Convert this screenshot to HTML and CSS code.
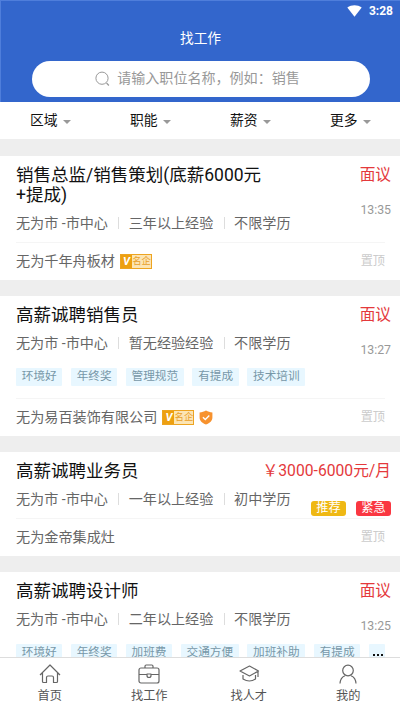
FILE: index.html
```html
<!DOCTYPE html>
<html lang="zh-CN">
<head>
<meta charset="utf-8">
<title>找工作</title>
<link rel="stylesheet" href="styles.css">
</head>
<body>
<div class="app">
  <header class="header">
    <div class="status">
      <svg class="wifi" viewBox="0 0 15 12"><path d="M.3 2.6C4.6-.6 10.4-.6 14.7 2.6L7.5 11.8z" fill="#fff"/></svg>
      <span>3:28</span>
    </div>
    <h1 class="page-title">找工作</h1>
    <div class="search">
      <svg class="search-icon" viewBox="0 0 15 16" fill="none" stroke="#999" stroke-width="1"><circle cx="7" cy="7.2" r="6.1"/><path d="M11.5 12l2.4 2.5" stroke-width="1.2"/></svg>
      <span>请输入职位名称，例如：销售</span>
    </div>
  </header>
  <nav class="filters">
    <div class="filter">区域<i class="caret"></i></div>
    <div class="filter">职能<i class="caret"></i></div>
    <div class="filter">薪资<i class="caret"></i></div>
    <div class="filter">更多<i class="caret"></i></div>
  </nav>
  <main class="list">
    <article class="card">
      <div class="top">
        <div class="info">
          <h2 class="title">销售总监/销售策划(底薪6000元<br>+提成)</h2>
          <div class="meta"><span>无为市 -市中心</span><span>三年以上经验</span><span>不限学历</span></div>
        </div>
        <div class="side"><div class="price">面议</div><div class="time">13:35</div></div>
      </div>
      <div class="company"><span>无为千年舟板材</span><span class="famous"><b>V</b><em>名企</em></span><span class="pin">置顶</span></div>
    </article>
    <article class="card">
      <div class="top">
        <div class="info">
          <h2 class="title">高薪诚聘销售员</h2>
          <div class="meta"><span>无为市 -市中心</span><span>暂无经验经验</span><span>不限学历</span></div>
        </div>
        <div class="side"><div class="price">面议</div><div class="time">13:27</div></div>
      </div>
      <div class="tags"><span>环境好</span><span>年终奖</span><span>管理规范</span><span>有提成</span><span>技术培训</span></div>
      <div class="company"><span>无为易百装饰有限公司</span><span class="famous"><b>V</b><em>名企</em></span>
        <svg class="shield" viewBox="0 0 14 15"><path d="M7 .5C9 1.7 11 2.2 13.4 2.4V7.5c0 3.3-2.5 5.500-6.400 7C3.100 13 .6 10.800 .6 7.500V2.400C3 2.200 5 1.700 7 .5z" fill="#f7922e"/><path d="M3.900 7.200l2.400 2.300 4-4" fill="none" stroke="#fff" stroke-width="1.300"/></svg>
        <span class="pin">置顶</span></div>
    </article>
    <article class="card">
      <div class="top">
        <div class="info">
          <h2 class="title">高薪诚聘业务员</h2>
          <div class="meta"><span>无为市 -市中心</span><span>一年以上经验</span><span>初中学历</span></div>
        </div>
        <div class="side"><div class="price">￥3000-6000元/月</div><div class="badges"><span class="badge recommend">推荐</span><span class="badge urgent">紧急</span></div></div>
      </div>
      <div class="company"><span>无为金帝集成灶</span><span class="pin">置顶</span></div>
    </article>
    <article class="card">
      <div class="top">
        <div class="info">
          <h2 class="title">高薪诚聘设计师</h2>
          <div class="meta"><span>无为市 -市中心</span><span>二年以上经验</span><span>不限学历</span></div>
        </div>
        <div class="side"><div class="price">面议</div><div class="time">13:25</div></div>
      </div>
      <div class="tags"><span>环境好</span><span>年终奖</span><span>加班费</span><span>交通方便</span><span>加班补助</span><span>有提成</span><span class="more"><i></i><i></i><i></i></span></div>
    </article>
  </main>
  <nav class="tabbar">
    <div class="tab"><svg viewBox="0 0 22 20"><path d="M1 11L11 1l10 10M3.500 9v8.500q0 1 1 1h3v-5q0-1.500 1.500-1.500h4q1.500 0 1.500 1.500v5h3q1 0 1-1V9"/></svg><span>首页</span></div>
    <div class="tab"><svg viewBox="0 0 22 20"><rect x="1" y="4" width="20" height="15" rx="2"/><path d="M7 4V2.200Q7 1 8.200 1h5.600Q15 1 15 2.200V4M1 10.500h8M13 10.500h8M9 10v1.500a2 2 0 0 0 4 0V10z"/></svg><span>找工作</span></div>
    <div class="tab"><svg viewBox="0 0 22 20"><path d="M2 7L11.500 2 20.500 7l-9 5zM20 7v6M5 11v4q6.500 4 12.500 0v-4"/></svg><span>找人才</span></div>
    <div class="tab"><svg viewBox="0 0 22 20"><circle cx="11" cy="6.500" r="5.300"/><path d="M3 19.500c.2-4 1.800-6.500 5-7.800M19 19.500c-.2-4-1.800-6.500-5-7.800"/></svg><span>我的</span></div>
  </nav>
</div>
</body>
</html>
```
FILE: styles.css
```css
* { box-sizing: border-box; }
body {
  margin: 0;
  font-family: Roboto, "Noto Sans CJK SC", sans-serif;
  color: #111;
  background: #fff;
}
h1, h2 { margin: 0; font-weight: 400; }
svg { display: block; flex: none; }
.app {
  display: flex;
  flex-direction: column;
  width: 400px;
  height: 710px;
  overflow: hidden;
}
.header {
  flex: none;
  height: 102px;
  background: #3366cc;
  border-top: 1px solid #4f7edb;
  border-left: 1px solid #4f7edb;
  color: #fff;
}
.status {
  display: flex;
  justify-content: flex-end;
  align-items: center;
  gap: 7px;
  height: 20px;
  padding-right: 7px;
  font-size: 12px;
  font-weight: 700;
}
.wifi { width: 15px; height: 12px; }
.page-title {
  height: 34px;
  line-height: 34px;
  text-align: center;
  font-size: 13.7px;
}
.search {
  display: flex;
  justify-content: center;
  align-items: center;
  gap: 7px;
  width: 338px;
  height: 36px;
  margin: 6px 0 0 31px;
  padding-right: 7px;
  border-radius: 18px;
  background: #fff;
  color: #999;
  font-size: 14.050px;
  line-height: 34px;
}
.search span { margin-top: -2px; }
.search-icon { width: 15px; height: 16px; margin-top: -1px; }
.filters {
  flex: none;
  display: grid;
  grid-template-columns: repeat(4, 1fr);
  height: 37px;
  line-height: 35px;
  font-size: 13.8px;
}
.filter {
  display: flex;
  align-items: center;
  gap: 5.500px;
  padding-left: 30px;
}
.caret {
  border: 4px solid transparent;
  border-top-color: #999;
  border-bottom: 0;
  margin-top: 3px;
}
.list {
  flex: 1;
  min-height: 0;
  overflow: hidden;
  padding-top: 17px;
  background: #eee;
}
.card {
  padding: 9px 9px 0 16px;
  margin-bottom: 16px;
  background: #fff;
}
.top {
  display: flex;
  align-items: flex-start;
}
.info { flex: 1 1 0; min-width: 0; white-space: nowrap; }
.title { font-size: 17.500px; line-height: 20px; }
.meta {
  display: flex;
  margin-top: 9px;
  line-height: 18px;
  font-size: 14.100px;
  color: #666;
}
.meta span { flex: none; }
.meta span + span {
  margin-left: 10.300px;
  padding-left: 10.500px;
  background: linear-gradient(#ddd, #ddd) left center / 1px 12px no-repeat;
}
.side {
  flex: none;
  white-space: nowrap;
  display: flex;
  flex-direction: column;
  align-items: flex-end;
  margin-bottom: -20px;
}
.price { color: #e4393c; font-size: 15.700px; line-height: 20px; }
.time {
  margin-top: 16px;
  line-height: 18px;
  font-size: 12.300px;
  color: #999;
}
.badges { display: flex; gap: 10px; margin-top: 20px; }
.badge {
  width: 35px;
  height: 15px;
  line-height: 14px;
  border-radius: 3px;
  text-align: center;
  font-size: 12.200px;
  color: #fff;
}
.recommend { background: #efb814; }
.urgent { background: #fa3741; }
.tags {
  display: flex;
  gap: 8.500px;
  margin-top: 16px;
  margin-bottom: 12px;
  white-space: nowrap;
}
.tags span {
  flex: none;
  height: 18px;
  line-height: 17px;
  padding: 0 5.750px;
  border-radius: 1px;
  background: #e8f7ff;
  color: #7798a8;
  font-size: 11.650px;
}
.tags .more {
  display: flex;
  gap: 2px;
  width: 16px;
  padding: 10px 0 0 4px;
}
.more i { width: 2px; height: 2px; background: #111; }
.company {
  display: flex;
  align-items: center;
  height: 38px;
  margin: 10px 6px 0 0;
  padding-bottom: 3px;
  border-top: 1px solid #f5f5f5;
  font-size: 14.150px;
  color: #666;
}
.tags + .company { margin-top: 0; }
.famous {
  display: flex;
  width: 32px;
  height: 15px;
  margin: 3px 0 0 5px;
  border: 1px solid #eda421;
  background: #fce5b4;
  line-height: 12px;
}
.famous b {
  width: 11px;
  background: #eda011;
  color: #fff;
  font-size: 11px;
  line-height: 13px;
  font-style: italic;
  text-align: center;
}
.famous em {
  flex: 1;
  color: #e9a02a;
  font-size: 9.300px;
  font-style: normal;
  text-align: center;
}
.shield { width: 14px; height: 15px; margin: 3px 0 0 5px; }
.pin { margin-left: auto; color: #ccc; font-size: 12.200px; }
.tabbar {
  flex: none;
  display: grid;
  grid-template-columns: repeat(4, 99.500px);
  height: 53px;
  border-top: 1px solid #ddd;
  background: #fff;
  color: #555;
  font-size: 12.200px;
}
.tab {
  display: flex;
  flex-direction: column;
  align-items: center;
  padding-top: 6px;
}
.tab svg {
  width: 22px;
  height: 20px;
  fill: none;
  stroke: #666;
  stroke-width: 1.200;
  stroke-linejoin: round;
}
.tab span { margin-top: 3px; line-height: 18px; }
```
